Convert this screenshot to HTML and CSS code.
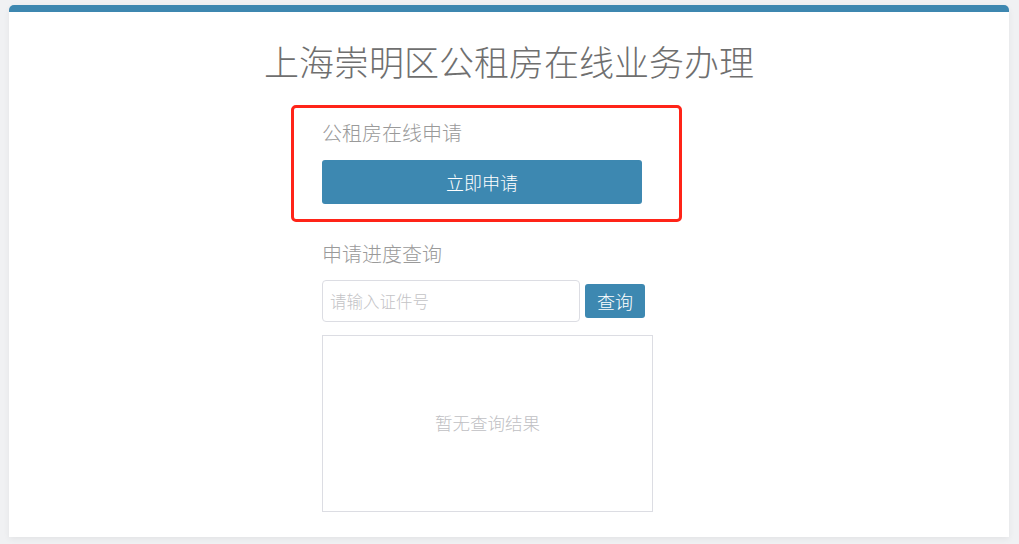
FILE: index.html
```html
<!DOCTYPE html>
<html lang="zh-CN">
<head>
  <meta charset="UTF-8">
  <meta name="viewport" content="width=device-width, initial-scale=1.0">
  <title>上海崇明区公租房在线业务办理</title>
  <link rel="stylesheet" href="styles.css">
</head>
<body>
  <div class="card">
    <h1 class="title">上海崇明区公租房在线业务办理</h1>

    <div class="apply-box">
      <p class="section-label">公租房在线申请</p>
      <button class="btn-apply">立即申请</button>
    </div>

    <div class="query">
      <p class="section-label">申请进度查询</p>
      <div class="query-row">
        <input type="text" class="id-input" placeholder="请输入证件号">
        <button class="btn-query">查询</button>
      </div>
      <div class="result">暂无查询结果</div>
    </div>
  </div>
</body>
</html>
```

FILE: styles.css
```css
/* Reset default margin and padding */
* {
  margin: 0;
  padding: 0;
  box-sizing: border-box;
}

body {
  background: #f0f1f3;
  font-family: "Noto Sans CJK SC", "Liberation Sans", sans-serif;
  font-weight: 300;
  padding: 5px 10px 0 9px;
  height: 100vh;
  overflow: hidden;
}

.card {
  background: #fff;
  width: 1000px;
  height: 532px;
  border-top: 7px solid #3d87b0;
  border-radius: 5px 5px 0 0;
  box-shadow: 0 2px 6px rgba(0, 0, 0, 0.06);
  padding-top: 28px;
}

.title {
  text-align: center;
  font-size: 35px;
  line-height: 42px;
  font-weight: 300;
  color: #6f6f6f;
}

.section-label {
  font-size: 20px;
  line-height: 30px;
  color: #9a9a9a;
}

/* Apply section, marked with the red frame */
.apply-box {
  width: 391px;
  margin: 23px 0 0 282px;
  border: 3px solid #ff2418;
  border-radius: 5px;
  padding: 10px 0 15px 28px;
}

.btn-apply {
  display: block;
  width: 320px;
  height: 44px;
  margin-top: 12px;
  background-color: #3d88b1;
  color: #fff;
  border: none;
  border-radius: 3px;
  font-family: inherit;
  font-weight: 300;
  font-size: 18px;
  cursor: pointer;
}

/* Progress query */
.query {
  width: 331px;
  margin: 17px 0 0 313px;
}

.query-row {
  display: flex;
  align-items: center;
  gap: 5px;
  margin-top: 11px;
}

.id-input {
  width: 258px;
  height: 42px;
  border: 1px solid #dcdde3;
  border-radius: 4px;
  padding: 0 7px;
  font-family: inherit;
  font-weight: 300;
  font-size: 16.5px;
  color: #555;
  outline: none;
}

.id-input::placeholder {
  color: #c3c3c6;
}

.btn-query {
  width: 60px;
  height: 34px;
  background-color: #3d88b1;
  color: #fff;
  border: none;
  border-radius: 3px;
  font-family: inherit;
  font-weight: 300;
  font-size: 18px;
  cursor: pointer;
}

.result {
  display: flex;
  justify-content: center;
  align-items: center;
  height: 177px;
  margin-top: 13px;
  padding-bottom: 3px;
  border: 1px solid #dcdde3;
  font-size: 17.5px;
  color: #c0c0c3;
}
```
